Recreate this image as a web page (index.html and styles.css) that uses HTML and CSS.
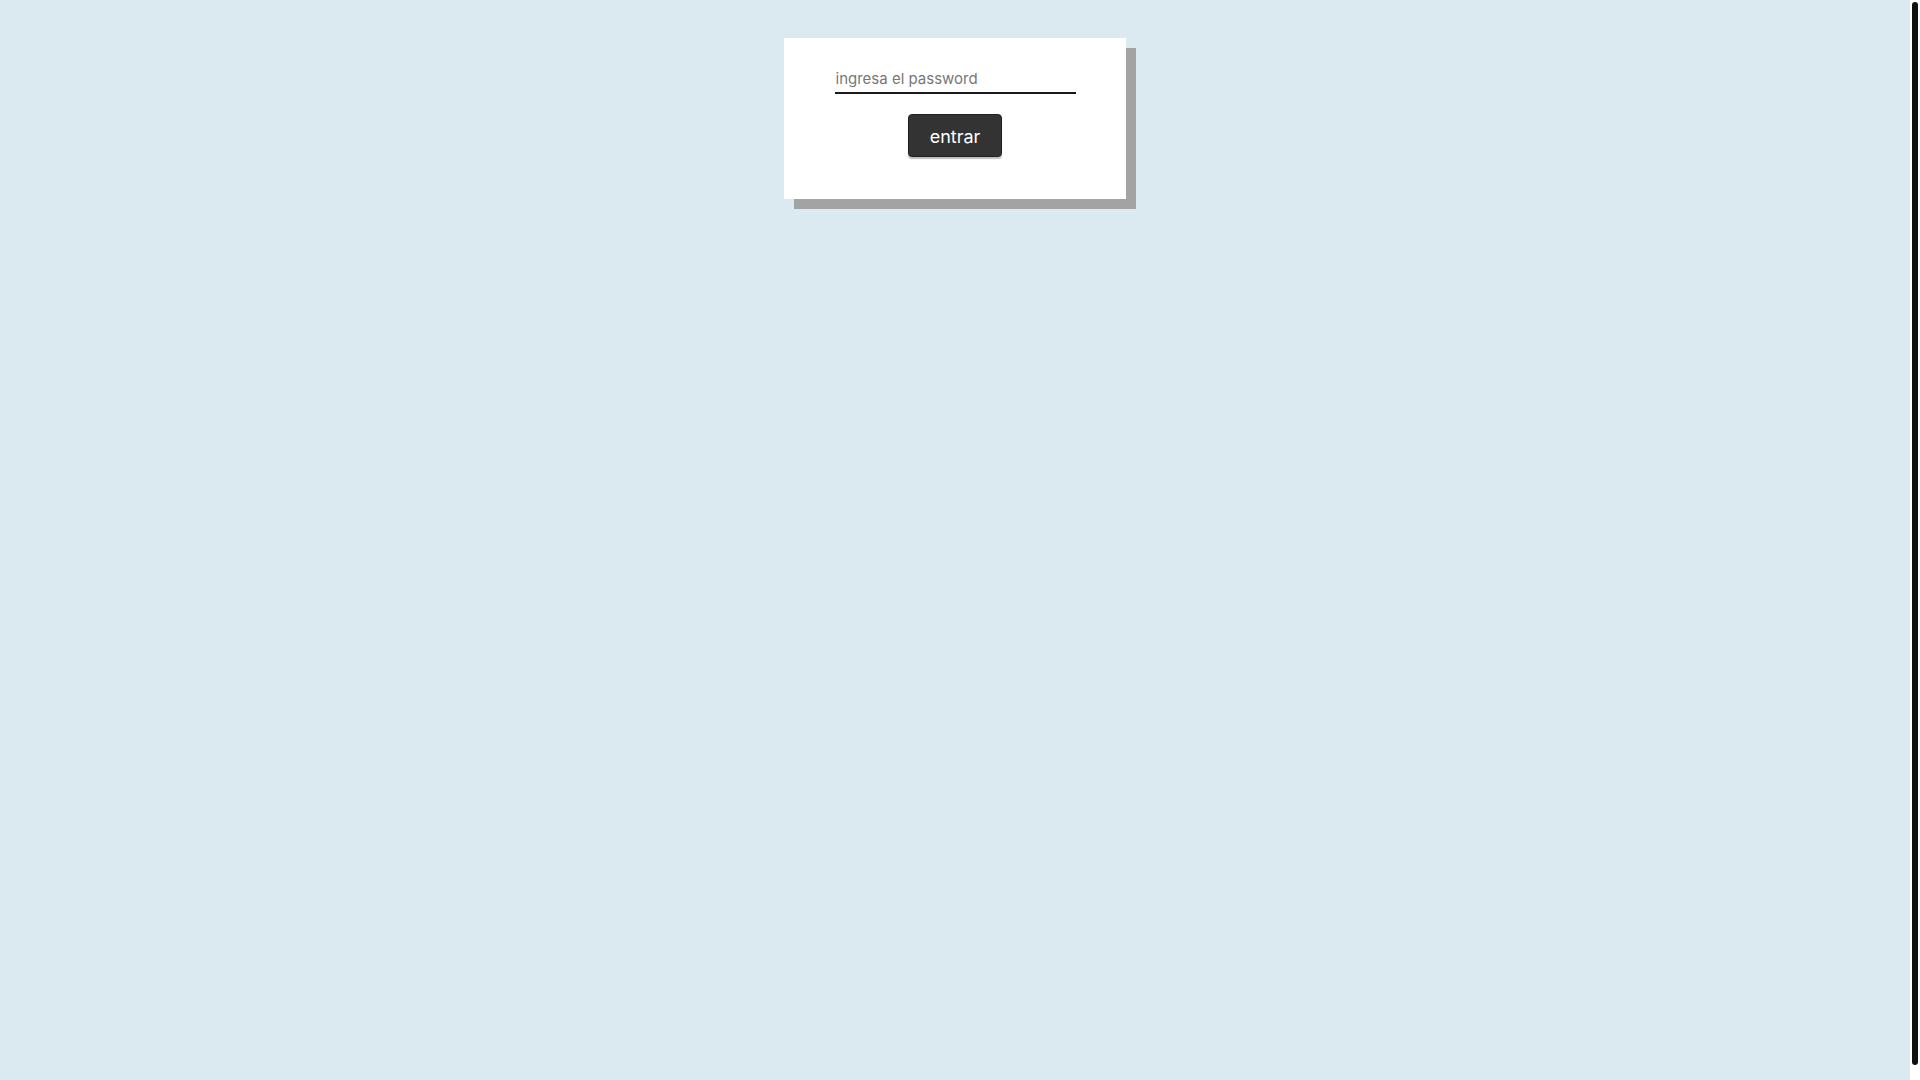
FILE: index.html
```html
<!DOCTYPE html>
<html lang="es">
<head>
<meta charset="utf-8">
<title>Login</title>
<link rel="stylesheet" href="styles.css">
</head>
<body>
<main class="page">
  <form class="card">
    <input class="pass" type="password" placeholder="ingresa el password">
    <button class="btn" type="button">entrar</button>
  </form>
</main>
<div class="scrollbar"><div class="thumb"></div></div>
</body>
</html>
```

FILE: styles.css
```css
html {
  background: #dbe9f0;
  overflow: hidden;
}
body {
  margin: 0;
  height: 100vh;
  display: flex;
  font-family: Inter, "Liberation Sans", sans-serif;
}
.page {
  flex: 1;
  display: flex;
  justify-content: center;
  align-items: flex-start;
  padding-top: 38px;
}
.scrollbar {
  width: 10px;
  box-sizing: border-box;
  background: #ffffff;
  padding: 2px 2px 0;
}
.thumb {
  height: 1063px;
  background: #111111;
  border-radius: 3px;
}
.card {
  width: 342px;
  box-sizing: border-box;
  background: #ffffff;
  box-shadow: 10px 10px 0 #a3a3a3;
  padding: 27px 0 42px;
  display: flex;
  flex-direction: column;
  align-items: center;
}
.pass {
  width: 241px;
  box-sizing: border-box;
  border: none;
  border-bottom: 2px solid #1a1a1a;
  padding: 5px 0 4px 1px;
  font-family: Inter, "Liberation Sans", sans-serif;
  font-size: 15px;
  line-height: 18px;
  outline: none;
  background: transparent;
}
.pass::placeholder {
  color: #777;
}
.btn {
  margin-top: 20px;
  background: #333333;
  color: #ffffff;
  border: 1px solid #222;
  border-radius: 4px;
  padding: 11px 21px 9px;
  font-family: Inter, "Liberation Sans", sans-serif;
  font-size: 18px;
  line-height: 21px;
  box-shadow: 0 2px 1px rgba(0,0,0,0.25);
}
```
